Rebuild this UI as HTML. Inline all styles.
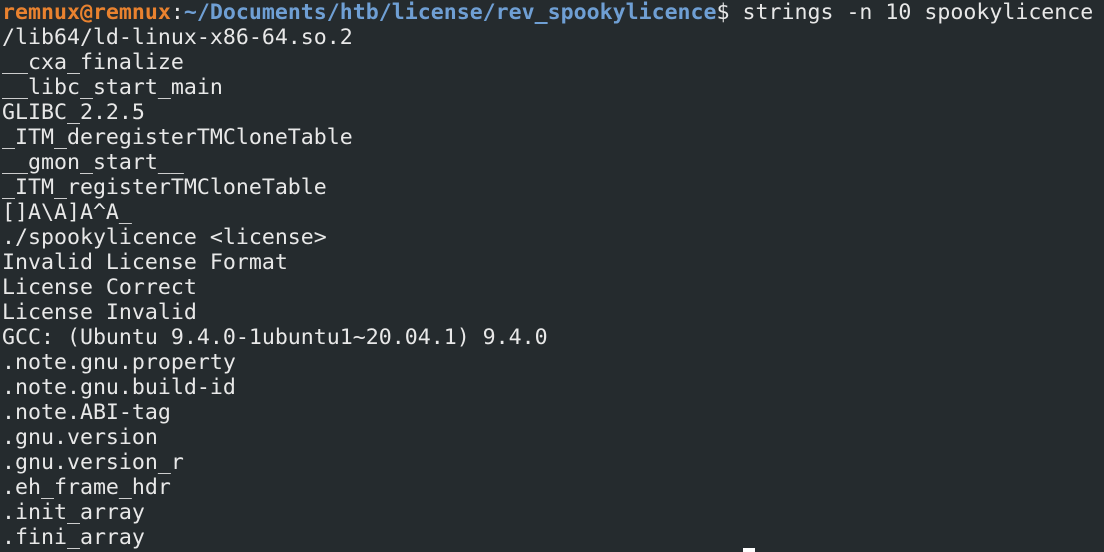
<!DOCTYPE html>
<html><head><meta charset="utf-8"><style>
html,body{margin:0;padding:0;background:#252b2e;width:1104px;height:552px;overflow:hidden}
pre{margin:0;padding:0 0 0 2px;font-family:"DejaVu Sans Mono","Liberation Mono",monospace;font-size:21.58px;line-height:25px;color:#e8e8e8;position:relative;top:0px}
.o{color:#e9822f;font-weight:bold}.b{color:#6f9fd4;font-weight:bold}
.cur{position:absolute;left:743px;top:548px;width:12px;height:4px;background:#fff}
</style></head><body><pre><span class="o">remnux@remnux</span>:<span class="b">~/Documents/htb/license/rev_spookylicence</span>$ strings -n 10 spookylicence
/lib64/ld-linux-x86-64.so.2
__cxa_finalize
__libc_start_main
GLIBC_2.2.5
_ITM_deregisterTMCloneTable
__gmon_start__
_ITM_registerTMCloneTable
[]A\A]A^A_
./spookylicence &lt;license&gt;
Invalid License Format
License Correct
License Invalid
GCC: (Ubuntu 9.4.0-1ubuntu1~20.04.1) 9.4.0
.note.gnu.property
.note.gnu.build-id
.note.ABI-tag
.gnu.version
.gnu.version_r
.eh_frame_hdr
.init_array
.fini_array
</pre><div class="cur"></div></body></html>
